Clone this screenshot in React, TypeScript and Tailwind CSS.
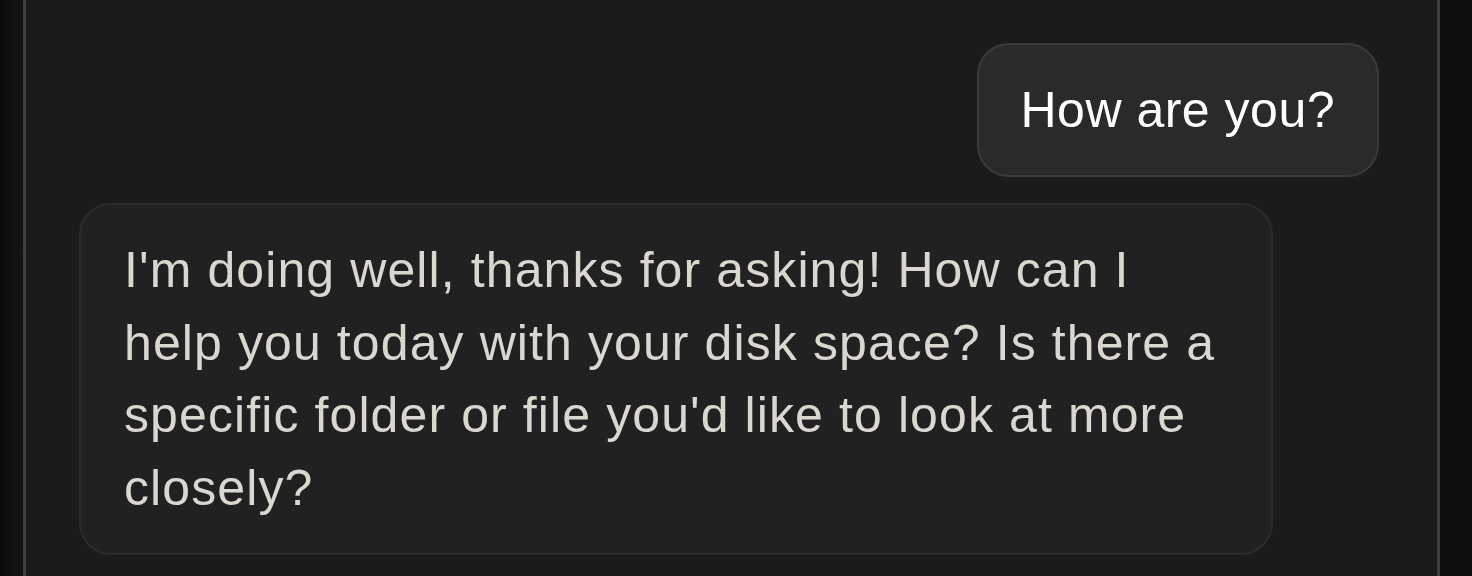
import React from 'react';

const App = () => {
  return (
    <div className="flex h-[576px] w-[1472px] overflow-hidden bg-[#0e0e10] font-['Liberation_Sans',Arial,sans-serif]">
      <div className="w-[23px] shrink-0 bg-gradient-to-r from-[#0b0b0d] to-[#141416]"></div>
      <div className="flex w-[1417px] shrink-0 flex-col border-x-[3px] border-[#3f3f41] bg-[#1b1b1c] pt-[43px] pl-[53px] pr-[58px]">
        <div className="flex justify-end">
          <div className="rounded-[32px] border-2 border-[#3a3a3a] bg-[#2a2a2a] px-[42px] py-[29px] text-[50px] leading-[72px] tracking-[0.5px] text-white">
            How are you?
          </div>
        </div>
        <div className="mt-[26px] flex justify-start">
          <div className="w-[1194px] rounded-[32px] border-2 border-[#2c2c2c] bg-[#212121] px-[43px] py-[29px] text-[50px] leading-[72.5px] tracking-[1.1px] text-[#dad7d1]">
            I'm doing well, thanks for asking! How can I help you today with your disk space? Is there a specific folder or file you'd like to look at more closely?
          </div>
        </div>
      </div>
      <div className="flex-1 bg-[#0f0f10]"></div>
    </div>
  );
};

export default App;
